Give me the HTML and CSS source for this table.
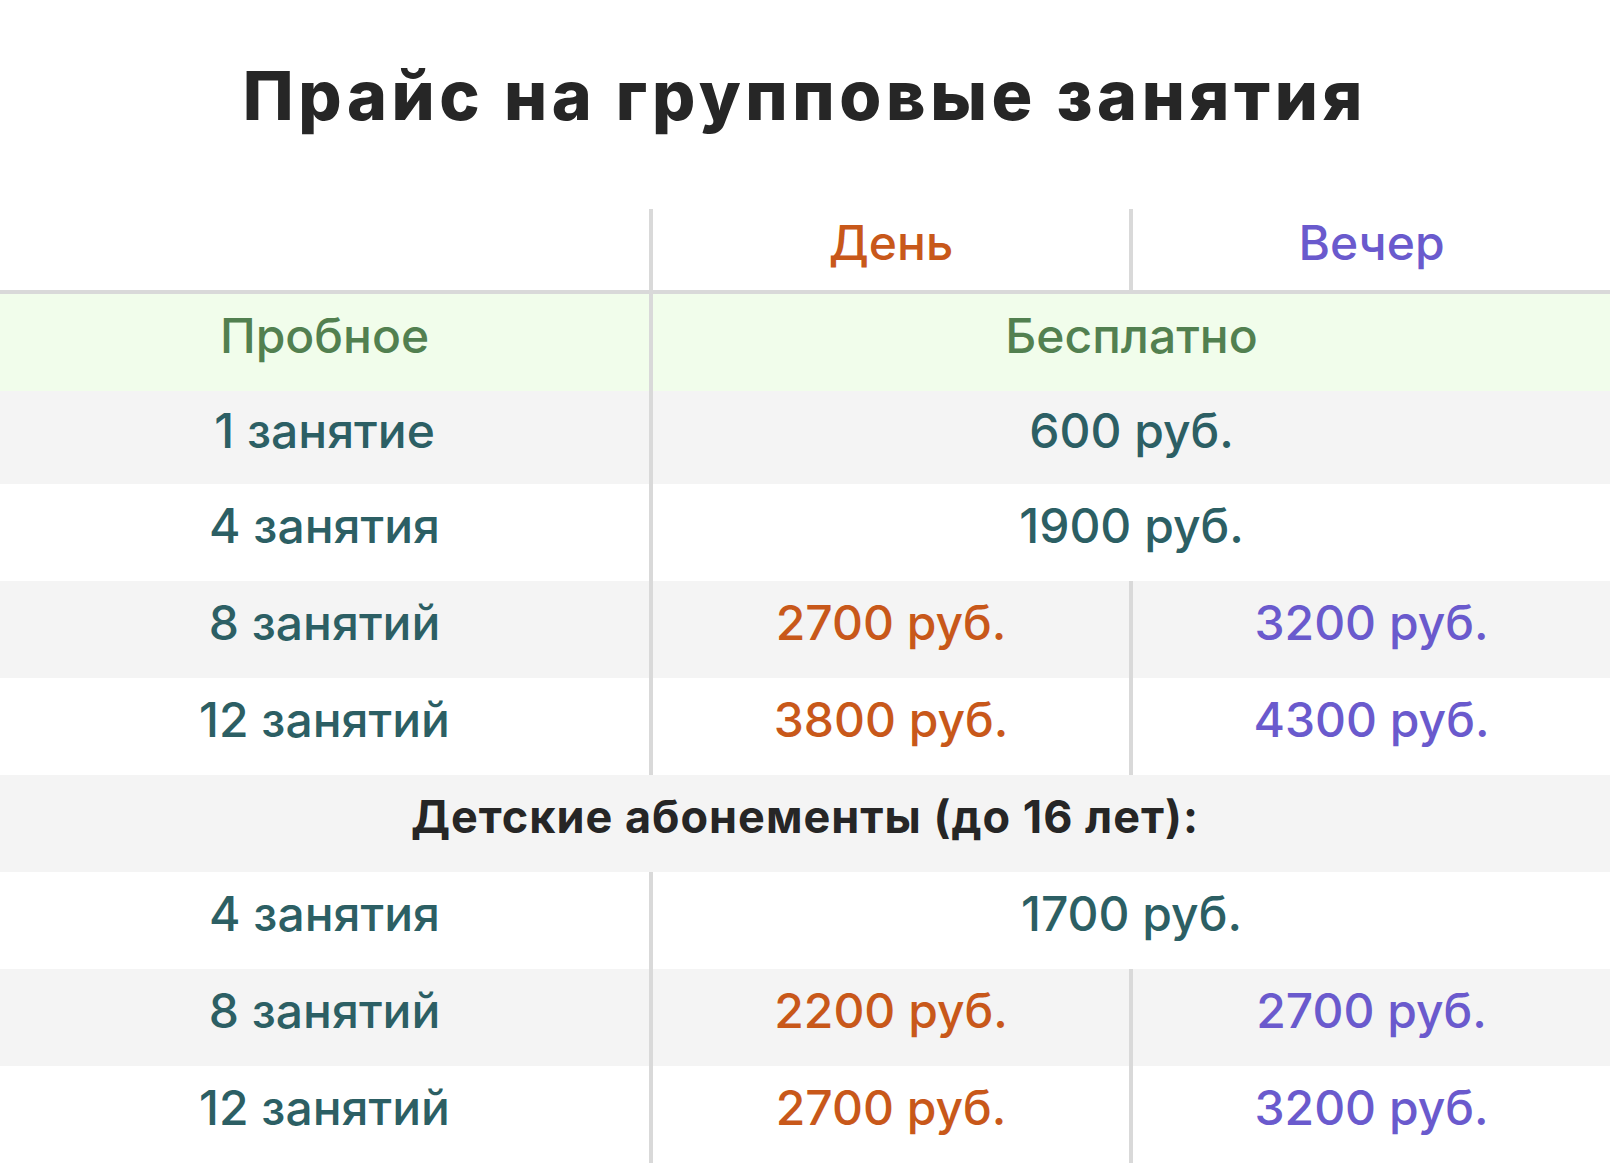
FILE: index.html
```html
<!DOCTYPE html>
<html lang="ru">
<head>
<meta charset="utf-8">
<title>Прайс на групповые занятия</title>
<link rel="stylesheet" href="styles.css">
</head>
<body>
<h1 class="title">Прайс на групповые занятия</h1>
<table class="price">
  <colgroup>
    <col class="c-name">
    <col class="c-day">
    <col class="c-eve">
  </colgroup>
  <thead>
    <tr class="head">
      <th></th>
      <th class="day sep">День</th>
      <th class="eve sep">Вечер</th>
    </tr>
  </thead>
  <tbody>
    <tr class="trial">
      <td>Пробное</td>
      <td class="sep" colspan="2">Бесплатно</td>
    </tr>
    <tr class="gray short">
      <td>1 занятие</td>
      <td class="sep" colspan="2">600 руб.</td>
    </tr>
    <tr>
      <td>4 занятия</td>
      <td class="sep" colspan="2">1900 руб.</td>
    </tr>
    <tr class="gray">
      <td>8 занятий</td>
      <td class="sep day">2700 руб.</td>
      <td class="sep eve">3200 руб.</td>
    </tr>
    <tr>
      <td>12 занятий</td>
      <td class="sep day">3800 руб.</td>
      <td class="sep eve">4300 руб.</td>
    </tr>
    <tr class="gray section">
      <td colspan="3">Детские абонементы (до 16 лет):</td>
    </tr>
    <tr>
      <td>4 занятия</td>
      <td class="sep" colspan="2">1700 руб.</td>
    </tr>
    <tr class="gray">
      <td>8 занятий</td>
      <td class="sep day">2200 руб.</td>
      <td class="sep eve">2700 руб.</td>
    </tr>
    <tr>
      <td>12 занятий</td>
      <td class="sep day">2700 руб.</td>
      <td class="sep eve">3200 руб.</td>
    </tr>
  </tbody>
</table>
</body>
</html>
```

FILE: styles.css
```css
html, body {
  margin: 0;
  padding: 0;
  background: #ffffff;
}

body {
  font-family: "Inter", "Noto Sans", sans-serif;
  color: #2c5f64;
}

.title {
  margin: 0;
  padding: 55px 0 74px;
  line-height: 80px;
  font-size: 68px;
  font-weight: 800;
  color: #262626;
  text-align: center;
  letter-spacing: 4.6px;
}

.price {
  width: 1610px;
  table-layout: fixed;
  border-collapse: separate;
  border-spacing: 0;
}

.c-name { width: 649px; }
.c-day { width: 480px; }
.c-eve { width: 481px; }

.price th,
.price td {
  padding: 0 0 14px;
  text-align: center;
  vertical-align: middle;
  font-size: 48px;
  font-weight: 500;
  line-height: 56px;
}

.price .sep {
  border-left: 4px solid #d9d9d9;
}

.head th {
  height: 67px;
  border-bottom: 4px solid #d9d9d9;
}

.price tbody tr td {
  height: 83px;
}

.price tbody tr.short td {
  height: 79px;
}

.day { color: #c8581a; }
.eve { color: #6a5acd; }

.trial { background: #f1fdeb; }
.trial td { color: #528050; }

.gray { background: #f4f4f4; }

.price .section td {
  font-weight: 700;
  font-size: 45px;
  letter-spacing: 1px;
  color: #262626;
}
```
